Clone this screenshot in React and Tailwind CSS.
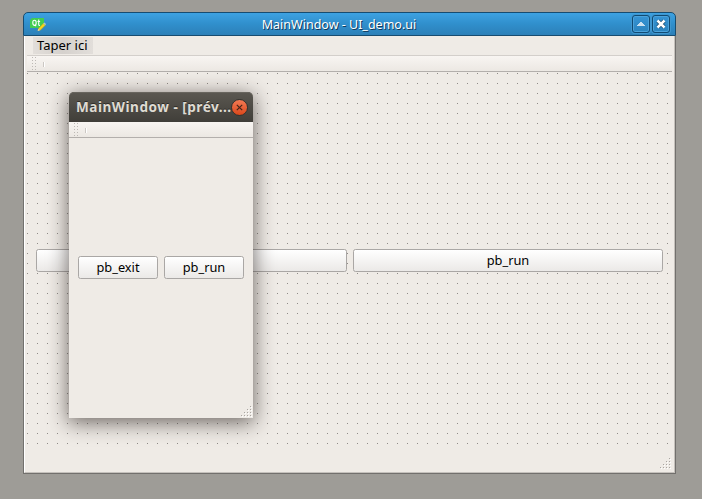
import React from "react";

const FONT = "font-['Noto_Sans','Open_Sans',sans-serif]";

function PushButton({ label = "", className = "" }) {
  return (
    <button
      className={`flex h-[23px] items-center justify-center rounded-[2.5px] border border-[#aaa7a5] bg-linear-to-b from-white to-[#ebe9e7] text-[12.8px] leading-none text-black ${className}`}
    >
      {label}
    </button>
  );
}

function ToolBar({ className = "" }) {
  return (
    <div className={`flex shrink-0 items-start border-b border-[#b3afac] bg-linear-to-b from-[#f8f5f2] to-[#ece8e3] ${className}`}>
      <svg width="20" height="15" shapeRendering="crispEdges" aria-hidden="true">
        {[0, 3, 6, 9, 12].map((y) => (
          <g key={y} fill="#bdb9b5">
            <rect x="5" y={y + 1} width="1" height="1" />
            <rect x="8" y={y + 1} width="1" height="1" />
          </g>
        ))}
        <rect x="16" y="6" width="1" height="5" fill="#cbc7c3" />
        <rect x="17" y="6" width="1" height="5" fill="#ffffff" />
      </svg>
    </div>
  );
}

function SizeGrip() {
  const dots = [];
  for (let row = 0; row < 4; row++) {
    for (let col = 3 - row; col < 4; col++) dots.push([col * 3, row * 3]);
  }
  return (
    <svg width="12" height="12" shapeRendering="crispEdges" aria-hidden="true">
      {dots.map(([x, y]) => (
        <g key={`${x}-${y}`}>
          <rect x={x + 1} y={y + 1} width="1" height="1" fill="#ffffff" />
          <rect x={x} y={y} width="1" height="1" fill="#a9a5a1" />
        </g>
      ))}
    </svg>
  );
}

function QtLogo() {
  return (
    <svg width="17" height="16" viewBox="0 0 17 16" aria-hidden="true">
      <path d="M2 2H14v7.5L11.5 12H0V4z" fill="#41cd52" />
      <path d="M4.5 4.2c-1.2 0-1.7.8-1.7 2.6s.5 2.6 1.7 2.6 1.7-.8 1.7-2.6-.5-2.6-1.7-2.6zm.5 4.6 1.1 1.4M8.7 3.6v4.9c0 .8.4 1 1.3.9M7.5 5.5h2.6" fill="none" stroke="#fff" strokeWidth="1.1" />
      <path d="m8.2 12.8 5-5.4 2.1 1.8-5 5-2.4.5z" fill="#f4d51d" stroke="#b39620" strokeWidth=".4" />
      <path d="m13.2 7.4 1-1 1.9 1.7-.9 1.1z" fill="#bfc9bc" />
      <path d="m7.7 14.9.5-1.9 1.7 1.3z" fill="#e9d8bd" />
    </svg>
  );
}

function FrameButton({ label, children }) {
  return (
    <button aria-label={label} className="flex size-[18px] items-center justify-center rounded-[3px] border border-[#114a72] bg-linear-to-b from-[#3594d5] to-[#2b83bd] shadow-[0_0_0_1px_#3f97d0,inset_0_0_0_1px_#4ba2da]">
      {children}
    </button>
  );
}

function DesignerWindow() {
  return (
    <section className="absolute left-[23px] top-[12px] flex h-[462px] w-[653px] flex-col">
      <header className="flex h-6 shrink-0 items-center rounded-t-[5px] border border-[#174c70] bg-linear-to-b from-[#3da2e2] via-[#308fcc] to-[#2c80b8] pl-1.5 pr-[5px]">
        <QtLogo />
        <h1 className="flex-1 pr-px pt-[3px] text-center text-[12.5px] leading-none text-white [text-shadow:1px_1px_0_#123a58]">MainWindow - UI_demo.ui</h1>
        <div className="flex gap-0.5">
          <FrameButton label="Shade">
            <svg width="8" height="4" shapeRendering="crispEdges">
              <path d="M3 0h2v1h1v1h1v1h1v1H0V3h1V2h1V1h1z" fill="#c9e0f0" />
            </svg>
          </FrameButton>
          <FrameButton label="Close">
            <svg width="10" height="10" viewBox="0 0 10 10">
              <path d="m1.8 1.8 6.4 6.4m0-6.4L1.8 8.2" stroke="#123e60" strokeWidth="3.8" />
              <path d="m1.5 1.5 7 7m0-7-7 7" stroke="#fff" strokeWidth="2.5" />
            </svg>
          </FrameButton>
        </div>
      </header>
      <div className="flex flex-1 flex-col border-x border-b border-[#72706d] bg-[#efebe6]">
        <div className="flex flex-1 flex-col border-b border-l border-r border-b-[#c5c1bc] border-l-white border-r-[#c5c1bc] px-0.5">
          <nav className="flex h-[20px] shrink-0 items-start border-b border-[#d3cfcb] pl-1.5 pt-px">
            <span className="flex h-[17px] w-[60px] items-center bg-linear-to-r from-[#e2deda] via-[#d5d1cd] to-[#e2deda] pl-1 text-[13px] leading-none text-black">Taper ici</span>
          </nav>
          <ToolBar className="h-[16px]" />
          <div className="flex h-[372px] w-[641px] gap-1.5 bg-[linear-gradient(90deg,transparent_1px,#efebe6_1px),linear-gradient(#8f8b87_1px,transparent_1px)] bg-[size:10px_10px] bg-[position:0_1px] pl-[9px] pt-[177px]">
            <PushButton className="w-[311px] shrink-0" />
            <PushButton label="pb_run" className="w-[310px] shrink-0" />
          </div>
          <footer className="mt-auto flex justify-end pb-0.5">
            <SizeGrip />
          </footer>
        </div>
      </div>
    </section>
  );
}

function PreviewWindow() {
  return (
    <section className="absolute left-[69px] top-[92px] flex h-[326px] w-[184px] flex-col rounded-t-[5px] bg-[#efebe6] shadow-[0_4px_20px_1px_rgba(35,28,25,0.62)]">
      <header className="flex h-[30px] shrink-0 items-center rounded-t-[5px] bg-linear-to-b from-[#5b5851] to-[#403e39] pl-[7px] pr-[5px] shadow-[inset_0_1px_0_#68655e]">
        <h2 className="w-[155px] whitespace-nowrap pb-px text-[13.6px] font-bold leading-none tracking-[0.5px] text-[#dfdbd2] [text-shadow:0_-1px_0_#2e2c28]">MainWindow - [prév...</h2>
        <button aria-label="Close" className="flex size-[17px] shrink-0 items-center justify-center rounded-full border border-[#35322d] bg-linear-to-b from-[#f27953] to-[#dc4717]">
          <svg width="7" height="7" viewBox="0 0 7 7">
            <path d="m.8.8 5.4 5.4m0-5.4L.8 6.2" stroke="#43251a" strokeWidth="1.2" />
          </svg>
        </button>
      </header>
      <ToolBar className="h-[16px]" />
      <main className="flex gap-1.5 px-[9px] pt-[118px]">
        <PushButton label="pb_exit" className="flex-1" />
        <PushButton label="pb_run" className="flex-1" />
      </main>
      <footer className="mt-auto flex justify-end">
        <SizeGrip />
      </footer>
    </section>
  );
}

export default function App() {
  return (
    <div className={`relative h-[499px] w-[702px] overflow-hidden bg-[#9e9c97] ${FONT}`}>
      <DesignerWindow />
      <PreviewWindow />
    </div>
  );
}
